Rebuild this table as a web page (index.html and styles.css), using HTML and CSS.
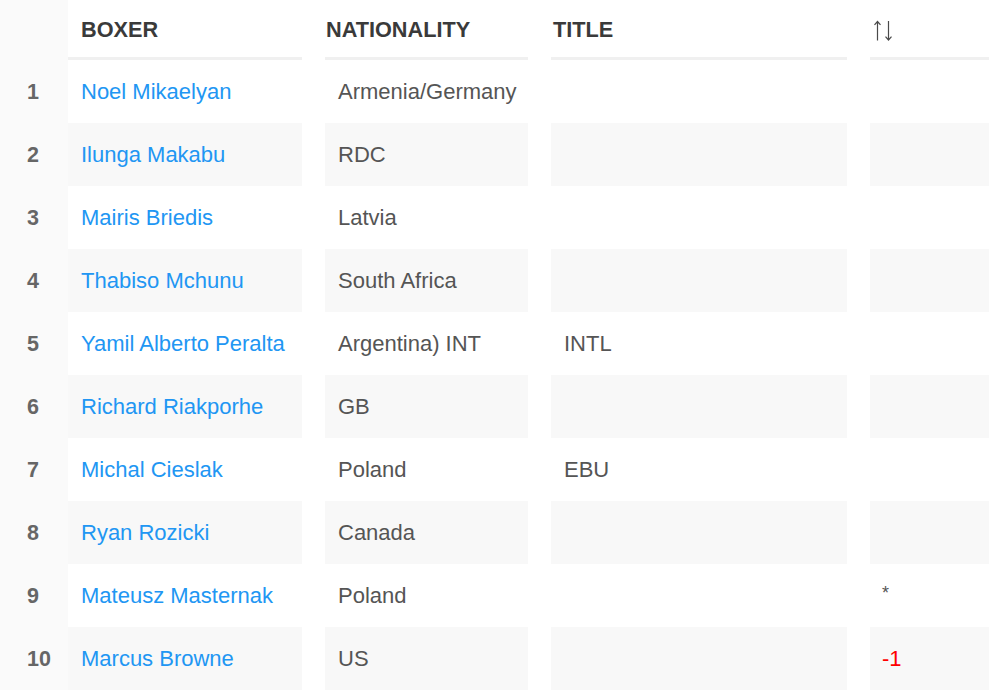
FILE: index.html
```html
<!DOCTYPE html>
<html>
<head>
<meta charset="utf-8">
<link rel="stylesheet" href="styles.css">
</head>
<body>
<div class="table">
  <div class="row head">
    <div class="c rank"></div>
    <div class="c boxer">BOXER</div>
    <div class="c nat">NATIONALITY</div>
    <div class="c title">TITLE</div>
    <div class="c sort">
      <svg class="arrows" width="22" height="22" viewBox="0 0 22 22">
        <path d="M5.5 1.5V20.5M2.5 4.8L5.5 1.5L8.5 4.8" fill="none" stroke="#4a4a4a" stroke-width="1.2"/>
        <path d="M16.5 1V20M13.5 16.7L16.5 20L19.5 16.7" fill="none" stroke="#4a4a4a" stroke-width="1.2"/>
      </svg>
    </div>
  </div>
  <div class="row"><div class="c rank">1</div><div class="c boxer"><a>Noel Mikaelyan</a></div><div class="c nat">Armenia/Germany</div><div class="c title"></div><div class="c sort"></div></div>
  <div class="row alt"><div class="c rank">2</div><div class="c boxer"><a>Ilunga Makabu</a></div><div class="c nat">RDC</div><div class="c title"></div><div class="c sort"></div></div>
  <div class="row"><div class="c rank">3</div><div class="c boxer"><a>Mairis Briedis</a></div><div class="c nat">Latvia</div><div class="c title"></div><div class="c sort"></div></div>
  <div class="row alt"><div class="c rank">4</div><div class="c boxer"><a>Thabiso Mchunu</a></div><div class="c nat">South Africa</div><div class="c title"></div><div class="c sort"></div></div>
  <div class="row"><div class="c rank">5</div><div class="c boxer"><a>Yamil Alberto Peralta</a></div><div class="c nat">Argentina) INT</div><div class="c title">INTL</div><div class="c sort"></div></div>
  <div class="row alt"><div class="c rank">6</div><div class="c boxer"><a>Richard Riakporhe</a></div><div class="c nat">GB</div><div class="c title"></div><div class="c sort"></div></div>
  <div class="row"><div class="c rank">7</div><div class="c boxer"><a>Michal Cieslak</a></div><div class="c nat">Poland</div><div class="c title">EBU</div><div class="c sort"></div></div>
  <div class="row alt"><div class="c rank">8</div><div class="c boxer"><a>Ryan Rozicki</a></div><div class="c nat">Canada</div><div class="c title"></div><div class="c sort"></div></div>
  <div class="row"><div class="c rank">9</div><div class="c boxer"><a>Mateusz Masternak</a></div><div class="c nat">Poland</div><div class="c title"></div><div class="c sort"><span class="star">*</span></div></div>
  <div class="row alt"><div class="c rank">10</div><div class="c boxer"><a>Marcus Browne</a></div><div class="c nat">US</div><div class="c title"></div><div class="c sort"><span class="down">-1</span></div></div>
</div>
</body>
</html>
```
FILE: styles.css
```css
html, body {
  margin: 0;
  padding: 0;
  background: #fff;
}
body {
  font-family: "Liberation Sans", Arial, sans-serif;
  font-size: 22px;
  color: #555;
}
.table {
  width: 989px;
}
.row {
  display: grid;
  grid-template-columns: 68px 234px 226px 319px 142px;
  height: 63px;
}
.c {
  display: flex;
  align-items: center;
  padding-left: 13px;
  min-width: 0;
  white-space: nowrap;
}
.nat, .title, .sort {
  margin-left: 23px;
}
.sort {
  padding-left: 12px;
}
.rank {
  background: #fafafa;
  padding-left: 27px;
  padding-top: 2px;
  font-weight: bold;
  color: #666;
  font-size: 21.5px;
}
.alt .boxer, .alt .nat, .alt .title, .alt .sort {
  background: #f8f8f8;
}
.head {
  height: 60px;
}
.head .c {
  font-weight: bold;
  font-size: 21.7px;
  color: #3a3a3a;
  padding-top: 2px;
}
.head .rank {
  padding-top: 0;
}
.head .boxer, .head .nat, .head .title, .head .sort {
  border-bottom: 3px solid #f0f0f0;
}
.head .nat { padding-left: 1px; }
.head .title { padding-left: 2px; }
.head .sort { padding-left: 2px; }
.arrows {
  display: block;
  margin-top: 3px;
}
a {
  color: #2196f3;
  text-decoration: none;
}
.star {
  font-size: 18px;
  color: #555;
  margin-top: -4px;
}
.down {
  color: #ff0000;
}
```
